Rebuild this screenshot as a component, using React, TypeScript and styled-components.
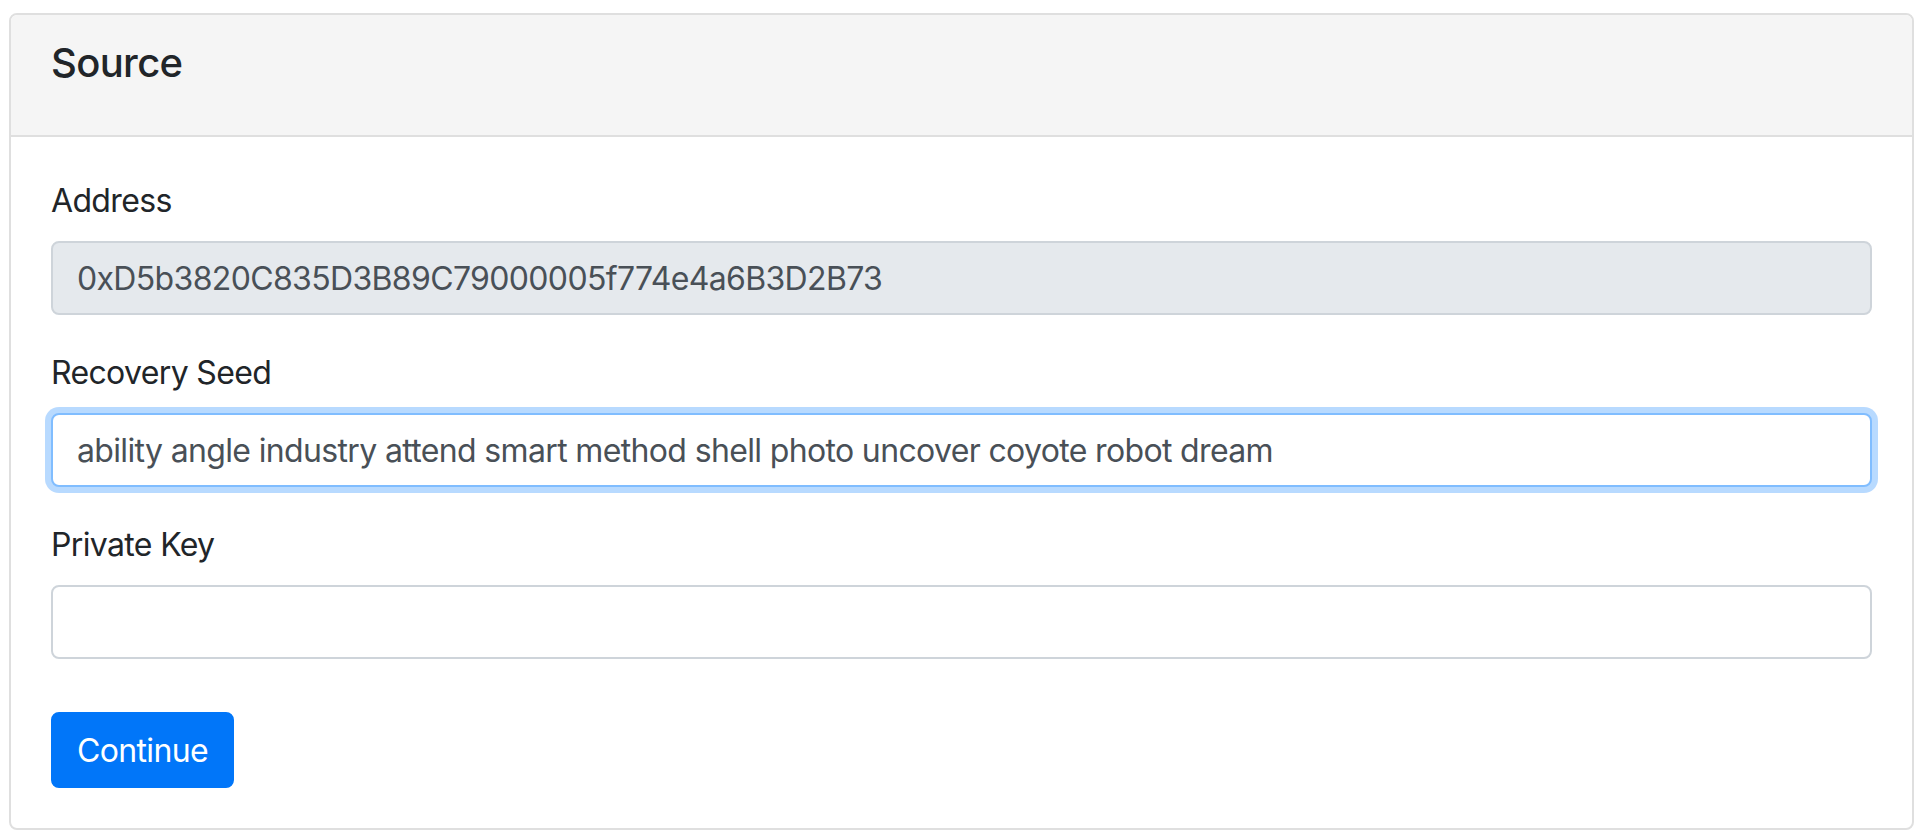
import styled, { createGlobalStyle } from 'styled-components';

const GlobalStyle = createGlobalStyle`
  body {
    margin: 0;
    background: #fff;
    font-family: Inter, 'Liberation Sans', sans-serif;
    letter-spacing: -0.65px;
    color: #212529;
  }
`;

const fields = [
  {
    id: 'address',
    label: 'Address',
    value: '0xD5b3820C835D3B89C79000005f774e4a6B3D2B73',
    disabled: true,
  },
  {
    id: 'seed',
    label: 'Recovery Seed',
    value:
      'ability angle industry attend smart method shell photo uncover coyote robot dream',
    focused: true,
  },
  { id: 'key', label: 'Private Key', value: '' },
];

const App = () => {
  return (
    <Page>
      <GlobalStyle />
      <Card>
        <CardHeader>
          <Title>Source</Title>
        </CardHeader>
        <CardBody>
          {fields.map((f) => (
            <FormGroup key={f.id}>
              <Label htmlFor={f.id}>{f.label}</Label>
              <Input
                id={f.id}
                defaultValue={f.value}
                disabled={f.disabled}
                $focused={f.focused}
                readOnly
              />
            </FormGroup>
          ))}
          <Button type='button'>Continue</Button>
        </CardBody>
      </Card>
    </Page>
  );
};

export default App;

const Page = styled.div`
  padding: 13px 14px 0 9px;
`;

const Card = styled.div`
  border: 2px solid #dfdfdf;
  border-radius: 8px;
  overflow: hidden;
`;

const CardHeader = styled.div`
  background: #f5f5f5;
  border-bottom: 2px solid #dfdfdf;
  padding: 24px 40px 25px;
`;

const Title = styled.h5`
  margin: 0 0 23px;
  font-size: 40px;
  font-weight: 500;
  line-height: 48px;
  color: #212529;
`;

const CardBody = styled.div`
  padding: 40px;
`;

const FormGroup = styled.div`
  margin-bottom: 34px;

  &:last-of-type {
    margin-bottom: 53px;
  }
`;

const Label = styled.label`
  display: block;
  margin-bottom: 16px;
  font-size: 32px;
  line-height: 48px;
  color: #212529;
`;

const Input = styled.input<{ $focused?: boolean }>`
  display: block;
  box-sizing: border-box;
  width: 100%;
  height: 74px;
  padding: 0 24px;
  font-family: inherit;
  font-size: 32px;
  letter-spacing: inherit;
  color: #495057;
  background: ${({ disabled }) => (disabled ? '#e5e9ed' : '#fff')};
  border: 2px solid ${({ $focused }) => ($focused ? '#80bdff' : '#ced4da')};
  border-radius: 8px;
  outline: none;
  box-shadow: ${({ $focused }) =>
    $focused ? '0 0 0 6px rgba(0, 123, 255, 0.28)' : 'none'};
`;

const Button = styled.button`
  display: inline-block;
  height: 76px;
  padding: 0 24px;
  font-family: inherit;
  font-size: 32px;
  letter-spacing: inherit;
  color: #fff;
  background: #0176f9;
  border: 2px solid #0176f9;
  border-radius: 8px;
  cursor: pointer;
`;
